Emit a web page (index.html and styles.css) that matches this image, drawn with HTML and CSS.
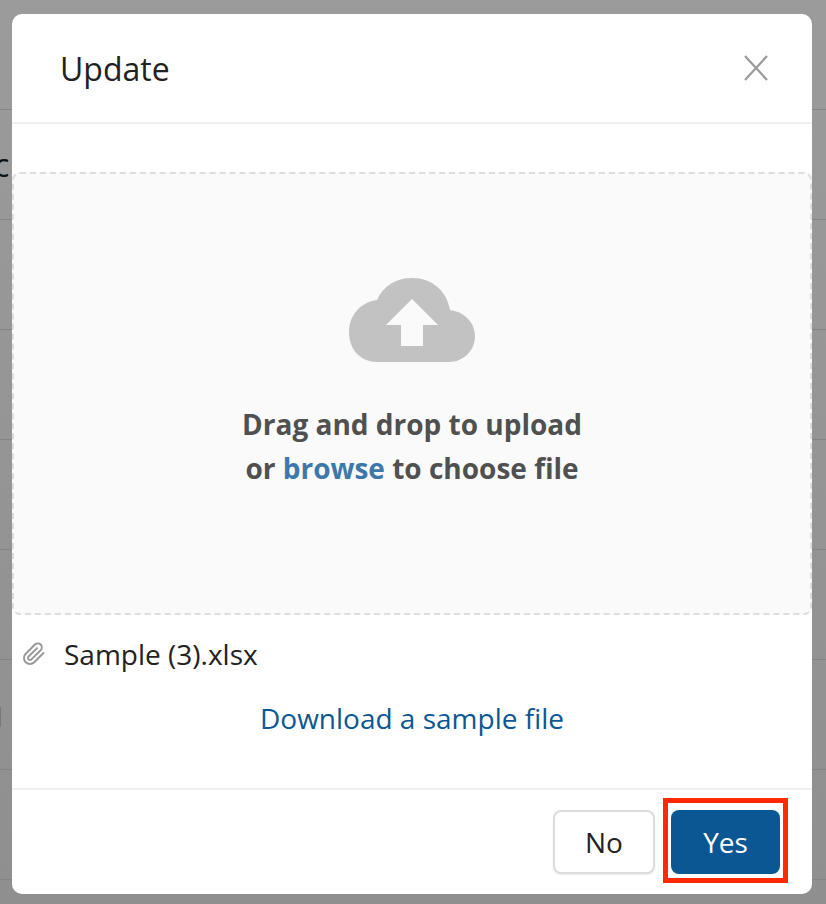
FILE: index.html
```html
<!DOCTYPE html>
<html lang="en">
<head>
  <meta charset="UTF-8">
  <meta name="viewport" content="width=device-width, initial-scale=1.0">
  <title>Update</title>
  <link rel="stylesheet" href="styles.css">
</head>
<body>
  <div class="page-behind">
    <div class="bg-row"></div>
    <div class="bg-row"><span class="bg-letter">c</span></div>
    <div class="bg-row"></div>
    <div class="bg-row"></div>
    <div class="bg-row"></div>
    <div class="bg-row"></div>
    <div class="bg-row"><span class="bg-mark"></span></div>
    <div class="bg-row"></div>
  </div>

  <div class="modal">
    <div class="modal-header">
      <h2 class="modal-title">Update</h2>
      <svg class="close-icon" width="24" height="26" viewBox="0 0 24 26">
        <path d="M1 1L23 25M23 1L1 25" fill="none" stroke="#999" stroke-width="2.2"/>
      </svg>
    </div>

    <div class="modal-body">
      <div class="dropzone">
        <svg class="cloud-icon" width="126" height="84" viewBox="0 0 126 84">
          <path fill="#c2c2c2" d="M28 84C12 84 0 72 0 54C0 37 12 24 28 22C34 8 47 0 63 0C83 0 98 13 101 32C116 34 126 45 126 58C126 73 114 84 100 84Z"/>
          <path fill="#fafafa" d="M63 21L89 47H74V68H52V47H37Z"/>
        </svg>
        <p class="drop-text">Drag and drop to upload<br>or <a class="browse-link">browse</a> to choose file</p>
      </div>

      <div class="file-row">
        <svg class="clip-icon" width="24" height="24" viewBox="0 0 24 24">
          <path fill="none" stroke="#999" stroke-width="2" stroke-linecap="round" stroke-linejoin="round" d="M21.440 11.050l-9.190 9.190a6 6 0 0 1-8.490-8.490l9.190-9.190a4 4 0 0 1 5.660 5.660l-9.200 9.190a2 2 0 0 1-2.830-2.830l8.490-8.480"/>
        </svg>
        <span class="file-name">Sample (3).xlsx</span>
      </div>

      <div class="sample-row">
        <a class="sample-link">Download a sample file</a>
      </div>
    </div>

    <div class="modal-footer">
      <button class="btn btn-no">No</button>
      <span class="highlight">
        <button class="btn btn-yes">Yes</button>
      </span>
    </div>
  </div>
</body>
</html>
```

FILE: styles.css
```css
body {
  font-family: "Open Sans", "Noto Sans", sans-serif;
  background: linear-gradient(180deg, #9b9b9b, #8f8f8f);
  margin: 0;
  padding: 0;
  height: 904px;
  overflow: hidden;
  position: relative;
}
.bg-row {
  height: 109px;
  border-bottom: 1px solid #848484;
  position: relative;
}
.bg-letter {
  position: absolute;
  left: -6px;
  top: 36px;
  font-size: 32px;
  line-height: 38px;
  color: #111;
}
.bg-mark {
  position: absolute;
  left: 0;
  top: 47px;
  width: 1px;
  height: 20px;
  background-color: #777;
}
.modal {
  position: absolute;
  left: 12px;
  top: 14px;
  width: 800px;
  height: 880px;
  background-color: #ffffff;
  border-radius: 10px;
  display: flex;
  flex-direction: column;
}
.modal-header {
  height: 108px;
  padding: 0 44px 0 48px;
  border-bottom: 2px solid #f0f0f0;
  display: flex;
  align-items: center;
  justify-content: space-between;
}
.modal-title {
  margin: 0;
  font-size: 32px;
  font-weight: 400;
  color: #222;
}
.modal-body {
  flex: 1;
  padding-top: 48px;
  display: flex;
  flex-direction: column;
}
.dropzone {
  height: 443px;
  box-sizing: border-box;
  background-color: #fafafa;
  border: 2px dashed #dddddd;
  border-radius: 8px;
  display: flex;
  flex-direction: column;
  align-items: center;
  padding-top: 104px;
}
.drop-text {
  margin: 40px 0 0;
  font-size: 28px;
  font-weight: 700;
  line-height: 44px;
  color: #505050;
  text-align: center;
}
.browse-link {
  color: #3d78ab;
}
.file-row {
  display: flex;
  align-items: center;
  padding-left: 10px;
  margin-top: 21px;
  height: 36px;
  gap: 18px;
}
.file-name {
  font-size: 28px;
  color: #222;
}
.sample-row {
  text-align: center;
  margin-top: 27px;
}
.sample-link {
  font-size: 28px;
  line-height: 38px;
  color: #0b5794;
}
.modal-footer {
  height: 106px;
  box-sizing: border-box;
  border-top: 2px solid #f0f0f0;
  display: flex;
  align-items: flex-start;
  justify-content: flex-end;
  padding: 8px 24px 0 0;
  gap: 8px;
}
.btn {
  font-family: inherit;
  font-size: 28px;
  height: 64px;
  border-radius: 8px;
  padding: 0;
}
.btn-no {
  width: 102px;
  margin-top: 12px;
  background-color: #ffffff;
  border: 2px solid #dcdcdc;
  box-shadow: 0 1px 2px rgba(0, 0, 0, 0.08);
  color: #222;
}
.btn-yes {
  width: 109px;
  display: block;
  background-color: #0b5794;
  border: none;
  color: #ffffff;
}
.highlight {
  display: block;
  border: 5px solid #ff2a00;
  padding: 7px 3px 4px 3px;
}
```
